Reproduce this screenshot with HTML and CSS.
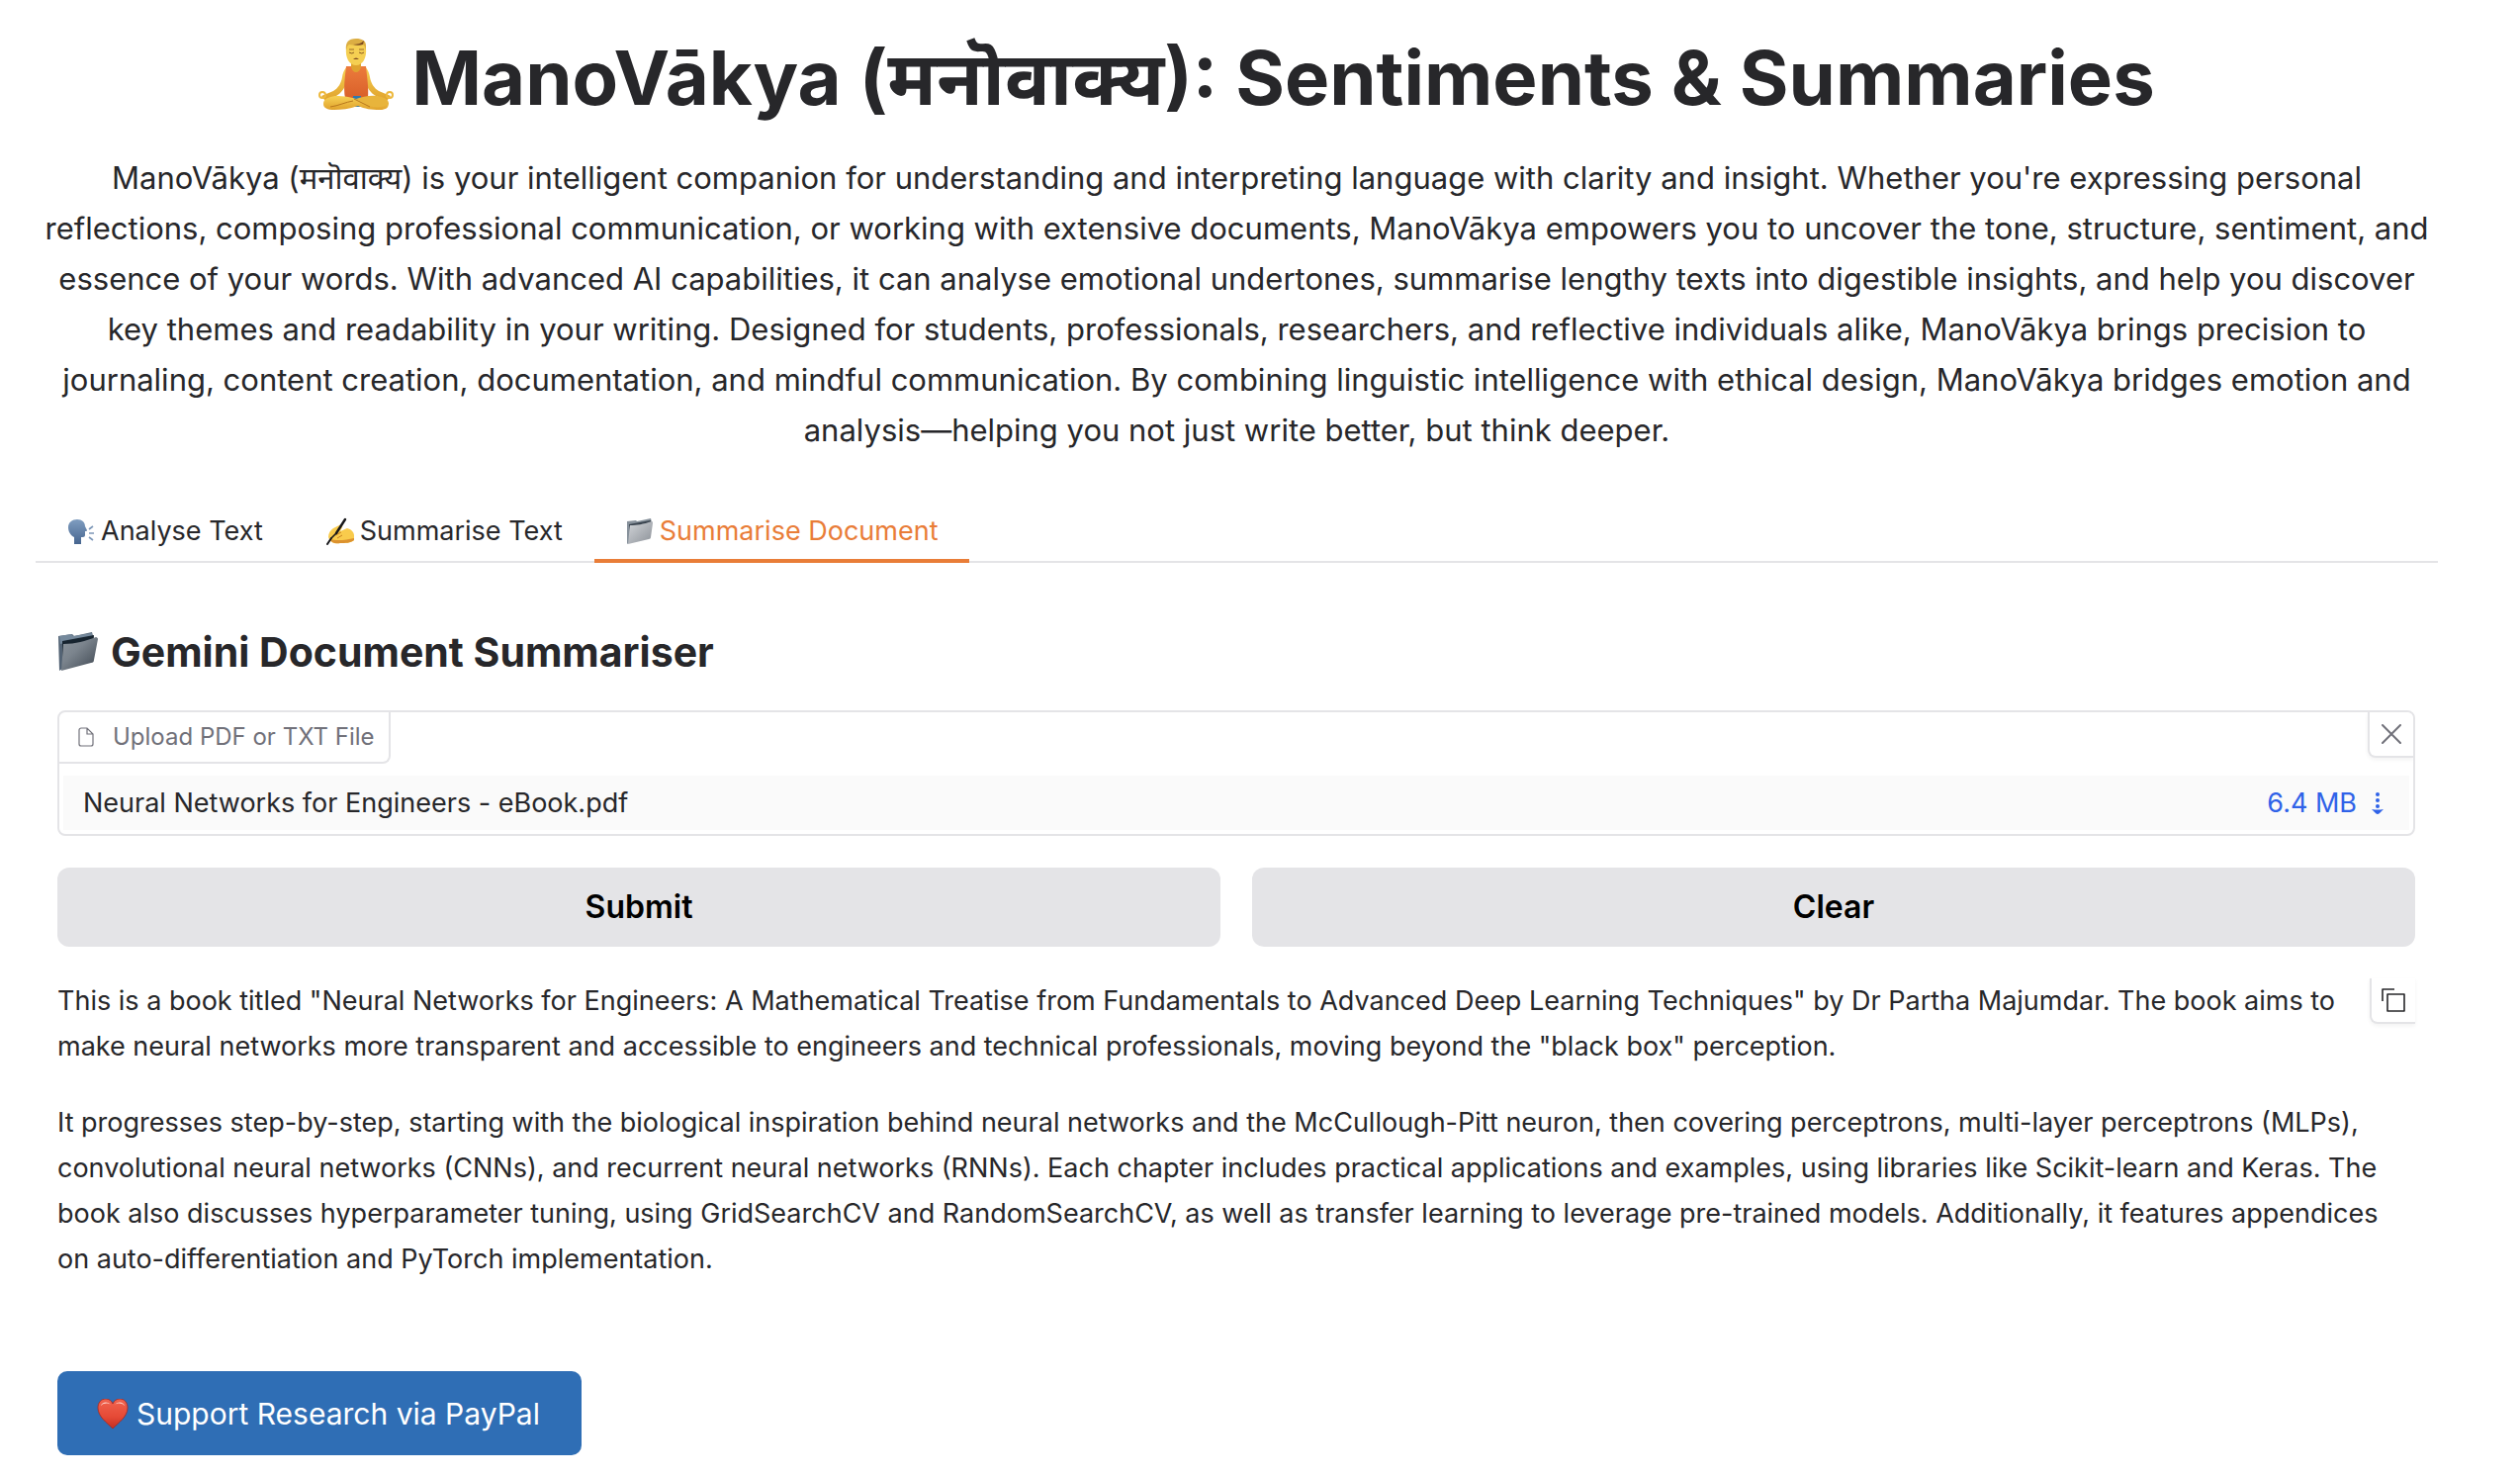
FILE: index.html
```html
<!DOCTYPE html>
<html lang="en">
<head>
<meta charset="utf-8">
<meta name="viewport" content="width=device-width, initial-scale=1">
<title>ManoVākya (मनॊवाक्य): Sentiments &amp; Summaries</title>
<link rel="stylesheet" href="styles.css">
</head>
<body>
<svg class="defs" aria-hidden="true">
  <defs>
    <linearGradient id="skin" x1="0" y1="0" x2="0" y2="1"><stop offset="0" stop-color="#f7d154"/><stop offset="1" stop-color="#e0a22c"/></linearGradient>
    <linearGradient id="shirt" x1="0" y1="0" x2="0" y2="1"><stop offset="0" stop-color="#ec7b3c"/><stop offset="1" stop-color="#d9602a"/></linearGradient>
    <linearGradient id="head" x1="0" y1="0" x2="0" y2="1"><stop offset="0" stop-color="#7f9dc0"/><stop offset="1" stop-color="#46658f"/></linearGradient>
    <linearGradient id="steel" x1="0" y1="0" x2="1" y2="1"><stop offset="0" stop-color="#8d959d"/><stop offset="0.4" stop-color="#7b848d"/><stop offset="1" stop-color="#3c454f"/></linearGradient>
    <linearGradient id="silver" x1="0" y1="0" x2="1" y2="1"><stop offset="0" stop-color="#d3d6da"/><stop offset="1" stop-color="#8b9097"/></linearGradient>
    <linearGradient id="red" x1="0" y1="0" x2="0" y2="1"><stop offset="0" stop-color="#f0634f"/><stop offset="0.6" stop-color="#e64a36"/><stop offset="1" stop-color="#c42e22"/></linearGradient>
  </defs>
</svg>
<main class="app">
  <header class="intro">
    <h1><svg class="lotus" viewBox="0 0 76 73" aria-hidden="true">
      <path d="M33 24h10v10H33z" fill="#dfa32f"/>
      <path d="M31 28c-4 1-6 5-7 11-1 6-4 11-9 14L3 58l4 5 11-5c5-3 9-8 11-15zM45 28c4 1 6 5 7 11 1 6 4 11 9 14l12 5-4 5-11-5c-5-3-9-8-11-15z" fill="url(#skin)"/>
      <path d="M28 10c0-6 4-8 10-8s10 2 10 8c1 9-3 17-10 17S27 19 28 10z" fill="#f5cf52"/>
      <path d="M28 12c-1-8 2-12 10-12 6 0 10 2 10 7v5c-1-3-1-5-3-6-5 1-10 1-14 0-2 1-2 3-3 6z" fill="#dcae43"/>
      <path d="M35 6c4 0 8-1 11-4l-1 4c-3 1-7 1-10 0z" fill="#7c4a20"/>
      <path d="M31 11h5M41 11h5" stroke="#9c6a28" stroke-width="1" fill="none"/>
      <path d="M31 14q3 2 5 0M41 14q3 2 5 0" stroke="#8a5b22" stroke-width="1" fill="none"/>
      <path d="M35 21q3-3 6 0z" fill="#7c4a20"/>
      <path d="M28 28h5c1 8 9 8 10 0h5c1 10 3 22 2 32H27c-2-10 0-22 1-32z" fill="url(#shirt)"/>
      <path d="M35 58h8v11h-8z" fill="#2f78ad"/>
      <path d="M5 66c0-5 5-7 12-8 8 0 18 1 26 5 4 2 8 4 13 4 6 0 9-2 15-2 0 5-3 7-9 7-9 0-15-1-22-4-9 3-17 4-24 4-7 0-11-2-11-6z" fill="url(#skin)"/>
      <path d="M71 66c0-5-5-7-12-8-7-1-15 1-21 3l13 7c7 2 14 2 20-2z" fill="#e8b43c"/>
      <path d="M36 61l16 8M12 69c8-1 16-5 23-6" stroke="#b9781d" stroke-width="1" fill="none"/>
      <circle cx="4" cy="57" r="3" fill="none" stroke="#edb93f" stroke-width="2"/>
      <circle cx="72" cy="57" r="3" fill="none" stroke="#edb93f" stroke-width="2"/>
    </svg> ManoVākya (<span lang="sa">मनॊवाक्य</span>): Sentiments &amp; Summaries</h1>
    <p>ManoVākya (<span lang="sa">मनॊवाक्य</span>) is your intelligent companion for understanding and interpreting language with clarity and insight. Whether you're expressing personal reflections, composing professional communication, or working with extensive documents, ManoVākya empowers you to uncover the tone, structure, sentiment, and essence of your words. With advanced AI capabilities, it can analyse emotional undertones, summarise lengthy texts into digestible insights, and help you discover key themes and readability in your writing. Designed for students, professionals, researchers, and reflective individuals alike, ManoVākya brings precision to journaling, content creation, documentation, and mindful communication. By combining linguistic intelligence with ethical design, ManoVākya bridges emotion and analysis—helping you not just write better, but think deeper.</p>
  </header>

  <nav class="tabs" role="tablist">
    <button class="tab" type="button" role="tab" aria-selected="false"><svg class="emoji" viewBox="0 0 28 28" aria-hidden="true">
      <path d="M7 27v-7C3 18 1 14 1 10 1 5 5 2 10 2c5 0 8 3 8 7l2 4c0 1-1 1-2 1v4c0 2-2 2-4 2v7z" fill="url(#head)"/>
      <path d="M22 12l4-3M22 16h5M22 20l4 3" stroke="#7d97b8" stroke-width="1.6" fill="none"/>
    </svg>Analyse Text</button>
    <button class="tab" type="button" role="tab" aria-selected="false"><svg class="emoji" viewBox="0 0 28 28" aria-hidden="true">
      <path d="M2 20c0-4 2-7 5-9l6-3c2-1 4 0 3 2l-2 4 7-3c4 1 7 4 7 7v5c-3 3-9 3-14 3-5 1-10 0-12-6z" fill="#f9cb4c"/>
      <path d="M4 22c6 2 16 1 24-1v2c-4 3-9 3-14 3-5 1-9 0-10-4z" fill="#dc922f"/>
      <path d="M9 18l6-3M11 21l5-3" stroke="#c98321" stroke-width="1" fill="none"/>
      <path d="M19 2L10 16" stroke="#17171a" stroke-width="2.4" stroke-linecap="round" fill="none"/>
      <path d="M5 21l-4 6" stroke="#17171a" stroke-width="2" stroke-linecap="round" fill="none"/>
      <path d="M10 16l-5 5" stroke="#17171a" stroke-width="1.6" fill="none"/>
    </svg>Summarise Text</button>
    <button class="tab tab-active" type="button" role="tab" aria-selected="true"><svg class="emoji" viewBox="0 0 28 28" aria-hidden="true">
      <path d="M1 4l9-1 1 1 14-3 1 4-22 20-3 2z" fill="#87919b"/>
      <path d="M3 7l22-4v5L4 14z" fill="#39434e"/>
      <path d="M4 8c7 0 13-1 22-4 1 0 1 1 1 2l-2 14c0 1-1 2-2 2L2 27z" fill="url(#silver)"/>
    </svg>Summarise Document</button>
  </nav>

  <section class="panel" role="tabpanel">
    <h2><svg class="folder" viewBox="0 0 42 40" aria-hidden="true">
      <path d="M1 4l14-2 2 2 18-4 1 4-2 22L5 37l-3 2z" fill="#536374"/>
      <path d="M2 4l12-2 2 2 19-3v3L3 12z" fill="#75899c"/>
      <path d="M5 9l32-6-1 14L5 34z" fill="#17242f"/>
      <path d="M6 12c13 0 22-3 33-7 1 0 2 1 2 2l-4 21c0 2-1 3-3 3L4 39z" fill="url(#steel)"/>
    </svg>Gemini Document Summariser</h2>

    <div class="upload">
      <div class="upload-head">
        <span class="upload-label"><svg class="icon-file" viewBox="0 0 16 20" aria-hidden="true"><path d="M9 1H3a2 2 0 0 0-2 2v14a2 2 0 0 0 2 2h10a2 2 0 0 0 2-2V7zM9 1v6h6" fill="none" stroke="currentColor" stroke-width="1.2"/></svg>Upload PDF or TXT File</span>
        <button class="icon-button clear-file" type="button" aria-label="Remove file"><svg class="icon-close" viewBox="0 0 20 20" aria-hidden="true"><path d="M1 1l18 18M19 1L1 19" fill="none" stroke="currentColor" stroke-width="2" stroke-linecap="round"/></svg></button>
      </div>
      <div class="file-row">
        <span>Neural Networks for Engineers - eBook.pdf</span>
        <a href="#download">6.4 MB<svg class="icon-down" viewBox="0 0 12 24" aria-hidden="true"><circle cx="6" cy="3" r="2"/><circle cx="6" cy="9" r="2"/><circle cx="6" cy="15" r="2"/><path d="M0 18q6 1 12 0l-4 4q-2 2-4 0z"/></svg></a>
      </div>
    </div>

    <div class="actions">
      <button type="button">Submit</button>
      <button type="button">Clear</button>
    </div>

    <article class="result">
      <button class="icon-button copy" type="button" aria-label="Copy"><svg class="icon-copy" viewBox="0 0 24 24" aria-hidden="true"><path d="M1 13V1h12M6 6h17v17H6z" fill="none" stroke="currentColor" stroke-width="1.6" stroke-linejoin="round"/></svg></button>
      <p>This is a book titled "Neural Networks for Engineers: A Mathematical Treatise from Fundamentals to Advanced Deep Learning Techniques" by Dr Partha Majumdar. The book aims to make neural networks more transparent and accessible to engineers and technical professionals, moving beyond the "black box" perception.</p>
      <p>It progresses step-by-step, starting with the biological inspiration behind neural networks and the McCullough-Pitt neuron, then covering perceptrons, multi-layer perceptrons (MLPs), convolutional neural networks (CNNs), and recurrent neural networks (RNNs). Each chapter includes practical applications and examples, using libraries like Scikit-learn and Keras. The book also discusses hyperparameter tuning, using GridSearchCV and RandomSearchCV, as well as transfer learning to leverage pre-trained models. Additionally, it features appendices on auto-differentiation and PyTorch implementation.</p>
    </article>

    <a class="support" href="#paypal"><svg class="heart" viewBox="0 0 32 30" aria-hidden="true">
      <path d="M16 30C10 24 1 18 1 9c0-5 3-9 8-9 3 0 6 2 7 5 1-3 4-5 7-5 5 0 8 4 8 9 0 9-9 15-15 21z" fill="url(#red)" stroke="#a8261d" stroke-width="0.8"/>
      <path d="M4 7c1-4 7-5 10-1-3-2-7-2-10 1zM18 6c3-4 9-3 10 1-3-3-7-3-10-1z" fill="#ffd9d2"/>
    </svg>Support Research via PayPal</a>
  </section>
</main>
</body>
</html>
```
FILE: styles.css
```css
* { box-sizing: border-box; }

body {
  margin: 0;
  background: #fff;
  color: #27272a;
  font: 27px/46px Inter, "Noto Sans", sans-serif;
}

h1, h2, p { margin: 0; }

button { font: inherit; color: inherit; cursor: pointer; }

svg { fill: currentColor; }

[lang="sa"] { font-family: "Noto Sans", sans-serif; }

.defs { position: absolute; width: 0; height: 0; }

.app { padding: 25px 83px 20px 36px; }

/* Heading and description */
.intro { text-align: center; }

.intro h1 {
  font-size: 76px;
  font-weight: 700;
  line-height: 104px;
}

.lotus { width: 76px; height: 73px; vertical-align: -6px; }

.intro p {
  margin-top: 24px;
  font-size: 31px;
  line-height: 51px;
}

/* Tabs */
.tabs {
  display: flex;
  margin-top: 47px;
  box-shadow: inset 0 -2px #e4e4e7;
}

.tab {
  display: flex;
  align-items: center;
  gap: 6px;
  height: 62px;
  padding: 2px 32px 0;
  border: 0;
  border-bottom: 4px solid transparent;
  background: none;
}

.tab-active { border-color: #e97d38; color: #e97d38; }

.emoji { width: 28px; height: 28px; }

/* Summariser panel */
.panel { padding: 62px 23px 0 22px; }

.panel h2 {
  display: flex;
  align-items: center;
  gap: 12px;
  font-size: 41px;
  font-weight: 700;
  line-height: 56px;
}

.folder { width: 42px; height: 40px; }

.upload {
  margin-top: 31px;
  border: 2px solid #e4e4e7;
  border-radius: 8px;
  overflow: hidden;
}

.upload-head {
  display: flex;
  justify-content: space-between;
  align-items: flex-start;
}

.upload-label {
  display: flex;
  align-items: center;
  gap: 19px;
  height: 52px;
  padding: 0 14px 0 19px;
  border: solid #e4e4e7;
  border-width: 0 2px 2px 0;
  border-radius: 0 0 8px 0;
  color: #71717a;
  font-size: 24px;
}

.icon-file { width: 16px; height: 20px; }

.icon-button {
  display: grid;
  place-items: center;
  width: 46px;
  height: 46px;
  padding: 0;
  border: solid #e4e4e7;
  border-width: 0 0 2px 2px;
  border-radius: 0 0 0 8px;
  background: #fff;
  box-shadow: 0 2px 4px rgb(0 0 0 / 5%);
}

.clear-file { color: #71717a; }

.icon-close { width: 20px; height: 20px; }

.file-row {
  display: flex;
  justify-content: space-between;
  align-items: center;
  height: 55px;
  margin: 12px 4px 4px;
  padding: 0 26px 0 20px;
  background: #fafafa;
}

.file-row a {
  display: flex;
  align-items: center;
  gap: 15px;
  color: #2f62e8;
  text-decoration: none;
}

.icon-down { width: 12px; height: 24px; }

.actions {
  display: grid;
  grid-template-columns: 1fr 1fr;
  gap: 32px;
  margin-top: 32px;
}

.actions button {
  height: 80px;
  border: 0;
  border-radius: 12px;
  background: #e4e4e7;
  color: #000;
  font-size: 32px;
  font-weight: 600;
}

.result { margin-top: 32px; }

.result p + p { margin-top: 31px; }

.copy { float: right; }

.icon-copy { width: 24px; height: 24px; }

.support {
  display: inline-flex;
  align-items: center;
  gap: 8px;
  height: 85px;
  margin-top: 90px;
  padding: 0 42px 0 40px;
  border-radius: 10px;
  background: #2f6eb5;
  color: #fff;
  font-size: 30px;
  text-decoration: none;
}

.heart { width: 32px; height: 30px; }
```
